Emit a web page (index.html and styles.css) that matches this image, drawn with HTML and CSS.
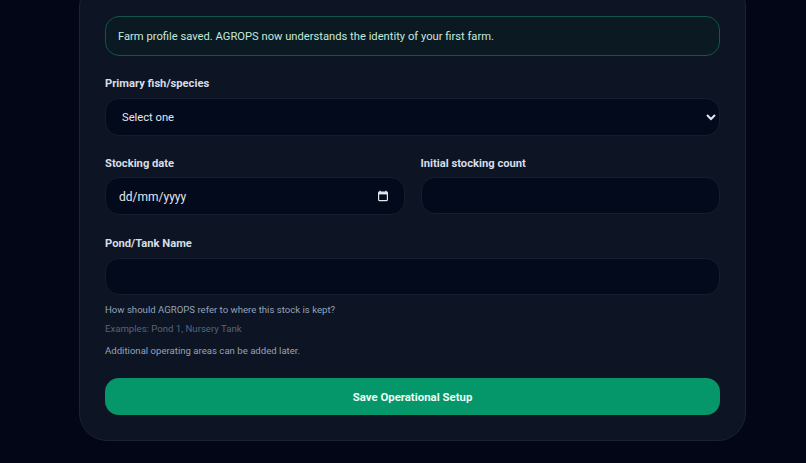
FILE: index.html
```html
<!DOCTYPE html>
<html lang="en">
<head>
    <meta charset="UTF-8">
    <meta name="viewport" content="width=device-width, initial-scale=1.0">
    <title>AGROPS Operational Setup</title>
    <link rel="stylesheet" href="styles.css">
</head>
<body>
    <div class="card">
        <div class="alert">Farm profile saved. AGROPS now understands the identity of your first farm.</div>

        <form class="setup-form">
            <div class="field field-species">
                <label for="species">Primary fish/species</label>
                <select id="species" class="control control-select">
                    <option>Select one</option>
                </select>
            </div>

            <div class="field-row">
                <div class="field">
                    <label>Stocking date</label>
                    <div class="control control-date">
                        <span>dd/mm/yyyy</span>
                        <svg class="calendar-icon" width="12" height="12" viewBox="0 0 12 12" aria-hidden="true">
                            <path d="M3 .8v1.6M9 .8v1.6" stroke="#e2e8f0" stroke-width="1.4" fill="none"/>
                            <rect x="1.6" y="2.2" width="8.8" height="8.4" rx=".8" stroke="#e2e8f0" stroke-width="1.2" fill="none"/>
                            <rect x="1.6" y="2.2" width="8.8" height="2.2" fill="#e2e8f0"/>
                        </svg>
                    </div>
                </div>
                <div class="field">
                    <label for="count">Initial stocking count</label>
                    <input id="count" class="control" type="text">
                </div>
            </div>

            <div class="field field-pond">
                <label for="pond">Pond/Tank Name</label>
                <input id="pond" class="control" type="text">
            </div>

            <p class="hint hint-first">How should AGROPS refer to where this stock is kept?</p>
            <p class="hint hint-muted">Examples: Pond 1, Nursery Tank</p>
            <p class="hint hint-last">Additional operating areas can be added later.</p>

            <button type="button" class="button">Save Operational Setup</button>
        </form>
    </div>
</body>
</html>
```

FILE: styles.css
```css
* {
    margin: 0;
    padding: 0;
    box-sizing: border-box;
}

html, body {
    height: 463px;
    overflow: hidden;
}

body {
    font-family: Roboto, "Open Sans", Arial, sans-serif;
    background-color: #020617;
    color: #e2e8f0;
    color-scheme: dark;
    padding: 0 60px 0 79px;
}

.card {
    width: 667px;
    height: 462px;
    margin-top: -21px;
    padding: 36px 25px 0;
    background-color: #0d1424;
    border: 1px solid #1a2333;
    border-radius: 28px;
}

.alert {
    height: 40px;
    padding: 1px 12px 0;
    display: flex;
    align-items: center;
    font-size: 11.2px;
    color: #c4e8da;
    background-color: #0b1a22;
    border: 1px solid #14544c;
    border-radius: 14px;
}

.setup-form {
    padding-top: 19px;
}

.field {
    display: flex;
    flex-direction: column;
    flex: 1;
}

.field label {
    height: 16px;
    line-height: 17px;
    margin-bottom: 7px;
    font-size: 11.2px;
    font-weight: 700;
    color: #d6dee8;
}

.field-row .field label {
    margin-bottom: 6px;
}

.control {
    width: 100%;
    height: 37px;
    font-family: inherit;
    font-size: 11.2px;
    color: #e2e8f0;
    background-color: #030a1c;
    border: 1px solid #151e2f;
    border-radius: 14px;
    outline: none;
}

.control-select {
    padding: 1px 12px 0;
    height: 38px;
}

.control-date {
    height: 38px;
    padding: 1px 15px 0 13px;
    display: flex;
    align-items: center;
    justify-content: space-between;
    font-size: 12px;
}

.calendar-icon {
    display: block;
    margin-top: -1px;
}

.field-row {
    display: flex;
    gap: 16px;
    margin-top: 19px;
}

.field-pond {
    margin-top: 20px;
}

.hint {
    font-size: 9.6px;
    line-height: 14px;
    color: #94a3b8;
}

.hint-first {
    margin-top: 8px;
}

.hint-muted {
    margin-top: 5px;
    color: #56647a;
}

.hint-last {
    margin-top: 8px;
}

.button {
    display: block;
    width: 100%;
    height: 37px;
    margin-top: 20px;
    font-family: inherit;
    font-size: 11.4px;
    font-weight: 700;
    color: #ecfdf5;
    background-color: #059669;
    border: none;
    border-radius: 14px;
    cursor: pointer;
}
```
